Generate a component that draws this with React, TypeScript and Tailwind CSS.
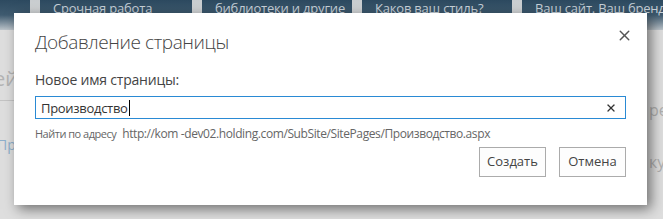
import { X } from "lucide-react";

const tiles = [
  { w: "w-[30px]", text: "" },
  { w: "w-[152px]", text: "Срочная работа" },
  { w: "w-[150px]", text: "библиотеки и другие" },
  { w: "w-[150px]", text: "Каков ваш стиль?" },
  { w: "w-[150px]", text: "Ваш сайт. Ваш бренд." },
];

function Banner() {
  return (
    <div className="flex h-[30px] gap-[10px] bg-gradient-to-b from-[#c9cdd0] to-[#dcdcdc]">
      {tiles.map((t, i) => (
        <div
          key={i}
          className={`${t.w} shrink-0 overflow-hidden bg-gradient-to-b from-[#2d4a60] via-[#3f5b70] to-[#bcc4ca] pl-[13px] pt-[1px] text-[13px] leading-[14px] tracking-[-0.2px] text-[#c7d1d9] whitespace-nowrap`}
        >
          {t.text}
        </div>
      ))}
    </div>
  );
}

export default function App() {
  return (
    <div
      className="relative h-[219px] w-[663px] overflow-hidden bg-[#dedede]"
      style={{ fontFamily: '"Open Sans", "Noto Sans", sans-serif' }}
    >
      <Banner />
      {/* page scraps behind the overlay */}
      <div className="absolute left-[-6px] top-[64px] text-[20px] text-[#b4b4b4]">ей</div>
      <div className="absolute left-0 top-[100px] h-px w-[14px] bg-[#c4c4c4]" />
      <div className="absolute left-[-3px] top-[134px] text-[14px] text-[#8fb0cc]">Пр</div>
      <div className="absolute left-[649px] top-[98px] text-[16px] text-[#b0b0b0]">ре</div>
      <div className="absolute left-[649px] top-[150px] text-[16px] text-[#b0b0b0]">ку</div>

      <div className="absolute left-[14px] top-[13px] h-[192px] w-[633px] bg-white px-[21px] shadow-[4px_4px_12px_rgba(0,0,0,0.5)]">
        <div className="flex items-start justify-between pt-[15px]">
          <h1 className="text-[19px] font-light leading-[28px] tracking-[-0.4px] text-[#444]">
            Добавление страницы
          </h1>
          <button className="mr-[-7px] mt-[-1px] text-[#555]">
            <X size={17} strokeWidth={2} />
          </button>
        </div>
        <div className="mt-[14px] text-[14px] leading-[20px] tracking-[-0.2px] text-[#444]">
          Новое имя страницы:
        </div>
        <div className="mt-[6px] flex h-[23px] items-center border border-[#2a8ad4] pl-[5px] pr-[8px]">
          <span className="text-[13px] leading-[20px] tracking-[-0.3px] text-[#333]">Производство</span>
          <span className="ml-px h-[16px] w-px bg-black" />
          <X size={12} strokeWidth={2.6} className="ml-auto text-[#333]" />
        </div>
        <div className="mt-[7px] flex items-center gap-[6px] leading-[16px] text-[#666]">
          <span className="text-[11px] tracking-[-0.5px]">Найти по адресу</span>
          <span className="text-[12px] tracking-[-0.4px]">
            http://kom -dev02.holding.com/SubSite/SitePages/Производство.aspx
          </span>
        </div>
        <div className="mt-[5px] flex justify-end gap-[13px]">
          <button className="h-[30px] w-[67px] border border-[#ababab] bg-[#fdfdfd] text-[13px] text-[#444]">
            Создать
          </button>
          <button className="h-[30px] w-[67px] border border-[#ababab] bg-[#fdfdfd] text-[13px] text-[#444]">
            Отмена
          </button>
        </div>
      </div>
    </div>
  );
}
